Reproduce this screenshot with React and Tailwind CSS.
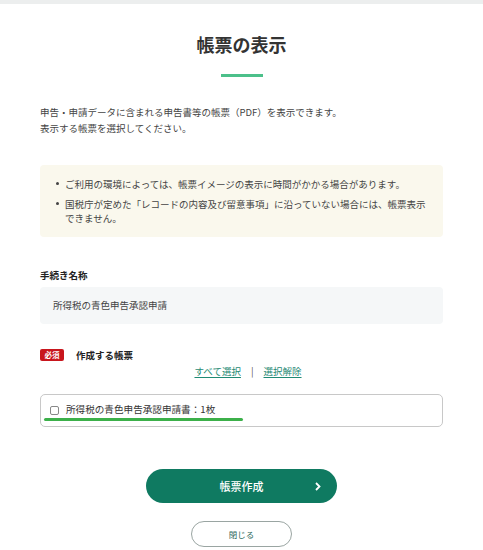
import React from "react";

const jp = { fontFamily: '"Noto Sans CJK JP", "Noto Sans", sans-serif' };

export default function App() {
  return (
    <div className="w-[483px] h-[550px] bg-white text-[#333] overflow-hidden" style={jp}>
      <div className="h-[4px] bg-[#eceeee]" />
      <div className="px-[40px]">
        <h1 className="pt-[27px] text-center text-[18px] leading-[26px] font-bold text-[#333]">帳票の表示</h1>
        <div className="mt-[17px] mx-auto w-[42px] h-[3px] bg-[#4cc08a]" />
        <p className="mt-[27px] text-[9.5px] leading-[16px] text-[#444]">
          申告・申請データに含まれる申告書等の帳票（PDF）を表示できます。<br />
          表示する帳票を選択してください。
        </p>
        <div className="mt-[29px] rounded-[4px] bg-[#faf8ed] pt-[12px] pb-[12px] pl-[25px] pr-[14px]">
          <ul className="flex flex-col gap-[6px] text-[9.5px] leading-[14px] text-[#444]">
            <li className="relative">
              <span className="absolute left-[-9px] top-[5px] w-[3px] h-[3px] rounded-full bg-[#444]" />
              ご利用の環境によっては、帳票イメージの表示に時間がかかる場合があります。
            </li>
            <li className="relative">
              <span className="absolute left-[-9px] top-[5px] w-[3px] h-[3px] rounded-full bg-[#444]" />
              国税庁が定めた「レコードの内容及び留意事項」に沿っていない場合には、帳票表示できません。
            </li>
          </ul>
        </div>
        <div className="mt-[31px] text-[9.5px] leading-[14px] font-bold text-[#222]">手続き名称</div>
        <div className="mt-[5px] h-[37px] rounded-[4px] bg-[#f5f7f8] px-[13px] flex items-center text-[9.5px] text-[#444]">
          所得税の青色申告承認申請
        </div>
        <div className="mt-[24px] flex items-center h-[14px]">
          <span className="w-[24px] h-[12px] rounded-[2px] bg-[#c8161d] text-white text-[7.5px] leading-[12px] font-bold text-center">必須</span>
          <span className="ml-[12px] text-[9.5px] leading-[14px] font-bold text-[#222]">作成する帳票</span>
        </div>
        <div className="mt-[2px] flex justify-center items-center pl-[13px] text-[9.5px] leading-[14px]">
          <span className="text-[#1f8a74] underline underline-offset-2">すべて選択</span>
          <span className="mx-[10px] text-[#555]">|</span>
          <span className="text-[#1f8a74] underline underline-offset-2">選択解除</span>
        </div>
        <div className="relative mt-[16px] h-[33px] rounded-[5px] border border-[#c8c8c8] flex items-center pl-[9px]">
          <span className="w-[9px] h-[9px] rounded-[2px] border border-[#888] bg-white" />
          <span className="ml-[7px] text-[9.6px] leading-[14px] text-[#333] -mt-[3px]">所得税の青色申告承認申請書：1枚</span>
          <span className="absolute left-[3px] top-[23px] w-[199px] h-[3px] bg-[#3cb04a] rounded-full" />
        </div>
        <div className="mt-[42px] flex justify-center">
          <div className="relative w-[191px] h-[34px] rounded-full bg-[#0f7a61] flex items-center justify-center">
            <span className="text-white text-[11px] font-medium">帳票作成</span>
            <svg className="absolute left-[169px] top-[13px]" width="6" height="9" viewBox="0 0 6 9" fill="none">
              <path d="M1 1 L4.5 4.5 L1 8" stroke="white" strokeWidth="1.8" />
            </svg>
          </div>
        </div>
        <div className="mt-[18px] flex justify-center">
          <div className="w-[101px] h-[26px] rounded-full border border-[#9aa5a2] flex items-center justify-center text-[8.5px] text-[#2d6a5c]">
            閉じる
          </div>
        </div>
      </div>
    </div>
  );
}
